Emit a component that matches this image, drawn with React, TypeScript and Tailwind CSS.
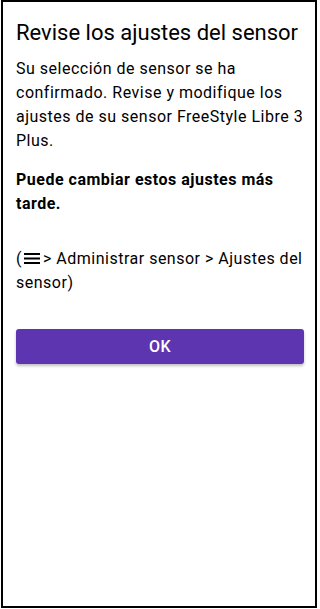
import React from "react";

export default function App() {
  return (
    <div className="w-[320px] h-[609px] bg-white" style={{ fontFamily: "Roboto, 'Noto Sans', sans-serif" }}>
      <div className="ml-px w-[316px] h-[608px] border-2 border-black box-border pl-[13px] pt-[17px] text-black">
        <h1 className="text-[22px] leading-[28px] font-normal text-[#000] whitespace-nowrap">Revise los ajustes del sensor</h1>
        <p className="mt-[10px] w-[290px] text-[16px] leading-[24px] tracking-[0.5px]">
          Su selección de sensor se ha confirmado. Revise y modifique los ajustes de su sensor FreeStyle Libre 3 Plus.
        </p>
        <p className="mt-[15px] w-[290px] text-[16px] leading-[24px] font-bold tracking-[0.5px]">
          Puede cambiar estos ajustes más tarde.
        </p>
        <p className="mt-[31px] w-[290px] text-[16px] leading-[24px] tracking-[0.5px]">
          (
          <svg width="16" height="14" viewBox="0 0 16 14" className="inline-block align-[-1px] ml-[2px] mr-[3px]">
            <rect x="0" y="2" width="16" height="2" fill="#000" />
            <rect x="0" y="6.5" width="16" height="2" fill="#000" />
            <rect x="0" y="11" width="16" height="2" fill="#000" />
          </svg>
          {"> Administrar sensor > Ajustes del sensor)"}
        </p>
        <button className="mt-[34px] w-[288px] h-[35px] rounded-[3px] bg-[#5e35b1] text-white text-[16px] font-medium tracking-[0.5px] shadow-[0_2px_3px_rgba(0,0,0,0.25)]">
          OK
        </button>
      </div>
    </div>
  );
}
